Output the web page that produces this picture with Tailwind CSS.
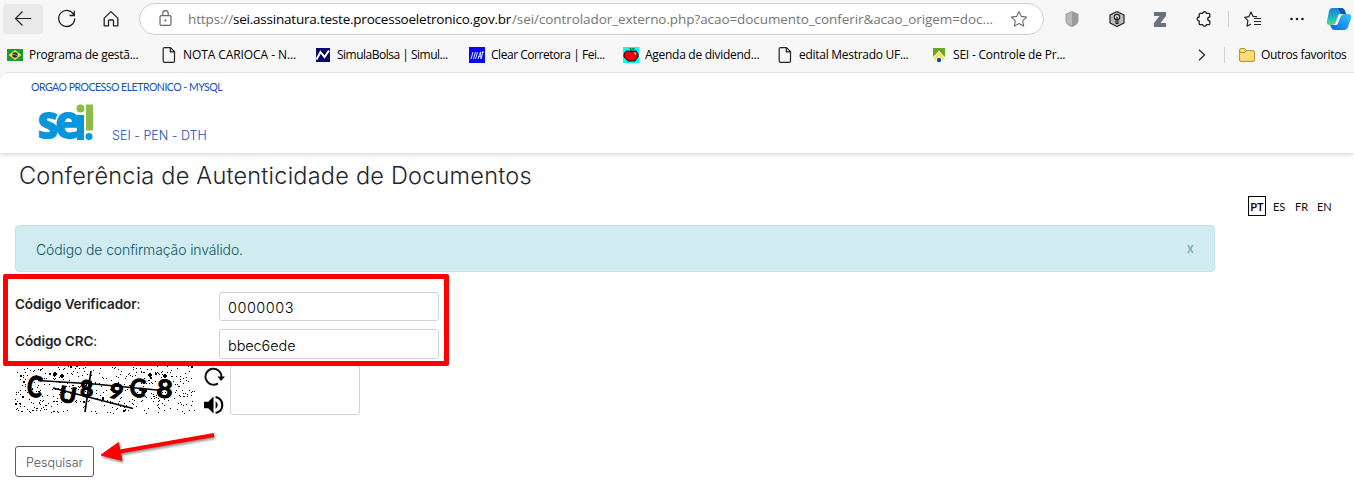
<!DOCTYPE html>
<html lang="pt-BR">
<head>
<meta charset="utf-8">
<title>SEI - Conferência de Autenticidade de Documentos</title>
<script src="https://cdn.jsdelivr.net/npm/@tailwindcss/browser@4"></script>
</head>
<body class="w-[1354px] h-[496px] overflow-hidden bg-[#f7f7f7] font-['Lato',sans-serif] text-[#212529]">

<!-- Browser toolbar -->
<div class="h-[72px] bg-[#f7f7f7] font-['Open_Sans',sans-serif] text-black">
  <div class="flex h-[38px] items-center pl-[3px]">
    <div class="flex h-[30px] w-10 items-center justify-center rounded bg-[#e9e9e9]">
      <svg class="size-5" viewBox="0 0 20 20" fill="none" stroke="#222" stroke-width="1.2"><path d="M18 9.5H2.5M9.5 2.5l-7 7 7 7"/></svg>
    </div>
    <svg class="ml-[14px] size-5" viewBox="0 0 20 20" fill="none" stroke="#222" stroke-width="1.3"><path d="M17 6.2A8 8 0 1 0 17.7 9.5M17.3 1.8v4.7h-4.8"/></svg>
    <svg class="ml-6 size-5" viewBox="0 0 20 20" fill="none" stroke="#222" stroke-width="1.3" stroke-linejoin="round"><path d="M3.2 9.1 10 2.6l6.800 6.500v7.700h-4.300v-4.800a1 1 0 0 0-1-1h-3a1 1 0 0 0-1 1v4.800H3.200z"/></svg>
    <div class="ml-[18px] flex h-8 w-[905px] items-center rounded-full border border-[#cfcfcf] bg-white pl-[18px]">
      <svg class="h-5 w-[15px]" viewBox="0 0 15 20" fill="none" stroke="#666" stroke-width="1.2"><rect x="2" y="6.600" width="11" height="9.800" rx="1.500"/><path d="M4.800 6.500V4.300a2.700 2.700 0 0 1 5.400 0v2.200"/><circle cx="7.500" cy="11.500" r=".5" fill="#666"/></svg>
      <div class="ml-[15px] flex text-[13.500px] leading-[18px] whitespace-nowrap text-[#767676]"><span class="w-[45px] tracking-[-0.130px]">https://</span><span class="w-[279px] tracking-[-0.220px] text-black">sei.assinatura.teste.processoeletronico.gov.br</span><span class="w-[484px] tracking-[-0.080px]">/sei/controlador_externo.php?acao=documento_conferir&amp;acao_origem=doc...</span></div>
      <svg class="ml-[14px] size-[18px] shrink-0" viewBox="0 0 18 18" fill="none" stroke="#6b6b6b" stroke-width="1.100" stroke-linejoin="round"><path d="m9 1.500 2.300 4.900 5.300.7-3.900 3.700 1 5.300L9 13.500l-4.700 2.600 1-5.300L1.400 7.100l5.300-.7z"/></svg>
    </div>
    <svg class="ml-[21px] h-4 w-[14px]" viewBox="0 0 14 16"><path d="M7 0 13.500 3v6c0 3.500-3 5.800-6.500 7C3.500 14.800.5 12.500.5 9V3z" fill="#9b9b9b"/><path d="M7 1v14c-3-1-5.500-3-5.500-6V3.700z" fill="#b9b9b9"/></svg>
    <svg class="ml-[30px] h-[18px] w-4" viewBox="0 0 16 18" fill="none" stroke="#222" stroke-width="1.200" stroke-linejoin="round"><path d="M8 1.500l7 3.500v8l-7 3.500L1 13V5z" fill="#b9bec4"/><circle cx="8" cy="7" r="2.700" fill="#e8eaec"/><path d="M7 9.500v4h2v-4M8 6.500v3"/></svg>
    <svg class="ml-[28px] h-[17px] w-[14px]" viewBox="0 0 14 17"><path d="M1 1h12v4L7.500 12H13v4H1v-4l5.500-7H1z" fill="#66727c"/></svg>
    <svg class="ml-7 h-[18px] w-[18px]" viewBox="0 0 18 18" fill="none" stroke="#222" stroke-width="1.300" stroke-linejoin="round"><path d="M5.200 3.300h2.400a2 2 0 0 1 3.900 0h2.300q1 0 1 1V7a2 2 0 0 0 0 4v2.700q0 1-1 1h-2.300a2 2 0 0 1-3.900 0H5.200q-1 0-1-1V11a2 2 0 0 1 0-4V4.300q0-1 1-1z"/></svg>
    <div class="ml-[15px] h-4 w-px bg-[#cfcfcf]"></div>
    <svg class="ml-[15px] h-[17px] w-[17px]" viewBox="0 0 17 17" fill="none" stroke="#222" stroke-width="1.200" stroke-linejoin="round"><path d="M13 5.700 9.100 5.500 7 1 4.900 5.700.8 6.300l3.100 3.300L3 15.200l4-2.200M10 7.500h7M10 10.500h7M10 13.500h7"/></svg>
    <svg class="ml-7 h-1 w-4" viewBox="0 0 16 4" fill="#222"><circle cx="2.500" cy="2" r="1.300"/><circle cx="8" cy="2" r="1.300"/><circle cx="13.500" cy="2" r="1.300"/></svg>
    <svg class="ml-[21px] h-6 w-[26px] shrink-0" viewBox="0 0 26 24">
      <defs><linearGradient id="ca" x1="0" y1="0" x2="0" y2="1"><stop offset="0" stop-color="#1680d6"/><stop offset=".5" stop-color="#20b1c5"/><stop offset="1" stop-color="#4ce08d"/></linearGradient><linearGradient id="cb" x1="1" y1="0" x2="0" y2="1"><stop offset="0" stop-color="#35c8f5"/><stop offset=".6" stop-color="#1a8cf2"/><stop offset="1" stop-color="#1858dc"/></linearGradient></defs>
      <path d="M6 1h9q3 0 4 3l1 3h-4q-3 0-4 3l-2 6q-1 2-3 2H4q-4 0-3-4l2-10q1-3 3-3z" fill="url(#ca)"/>
      <path d="M18 7h4q4 0 3 4l-3 9q-1 3-4 3H9q-3 0-4-3l-1-2h4q3 0 4-3l2-6q1-2 4-2z" fill="url(#cb)"/>
      <path d="M12 1h3q3 0 4 3l1 3h-5z" fill="#174fae"/><path d="M14.500 7H18q-2 0-3 2l-3 7q-.500 2-2 2H7q2 0 3-3l2-6q.800-2 2.500-2z" fill="#fff"/>
    </svg>
  </div>

  <!-- Favourites bar -->
  <div class="flex h-[34px] items-center pl-[7px] text-[12px] leading-4 tracking-[-0.280px] whitespace-nowrap">
    <div class="flex w-[154px] items-center gap-[6px]"><svg class="h-3 w-4" viewBox="0 0 16 12"><path d="M0 0h16v12H0z" fill="#149b32"/><path d="M8 1l6.500 5L8 11 1.500 6z" fill="#ffdf28"/><circle cx="8" cy="6" r="2.700" fill="#152d72"/><path d="M5.500 5.500q3-.5 5 1.500" stroke="#dde" stroke-width=".6" fill="none"/></svg>Programa de gestã...</div>
    <div class="flex w-[154px] items-center gap-[6px]"><svg class="h-4 w-4" viewBox="0 0 16 16" fill="none" stroke="#222" stroke-width="1.200" stroke-linejoin="round"><path d="M3.500.7h6l4 4V14q0 1.300-1.300 1.300H3.500q-1.300 0-1.300-1.300V2Q2.200.7 3.500.7zM9.300.7v4.200h4.200"/></svg><span class="tracking-[-0.080px]">NOTA CARIOCA - N...</span></div>
    <div class="flex w-[154px] items-center gap-[6px]"><svg class="h-4 w-4" viewBox="0 0 16 16"><path d="M1 1h14v14H1z" fill="#070766"/><path d="M1.500 12.500 5.500 5l4 5L14 3.500" stroke="#fff" stroke-width="2" fill="none"/></svg><span class="tracking-[-0.500px]">SimulaBolsa | Simul...</span></div>
    <div class="flex w-[154px] items-center gap-[6px]"><svg class="h-4 w-4" viewBox="0 0 16 16"><path d="M0 0h16v16H0z" fill="#0808f5"/><path d="m2 12 2-7M4.500 12l2-7m0 7 2-7M9 12l2.500-7 .5 7M9.500 9.500h2M12.500 5h2.500M13.700 5l-1.500 7" stroke="#dfe3ff" stroke-width="1" fill="none"/></svg><span class="tracking-[-0.460px]">Clear Corretora | Fei...</span></div>
    <div class="flex w-[154px] items-center gap-[6px]"><svg class="h-4 w-4" viewBox="0 0 16 16"><path d="M0 0h16v16H0z" fill="#00ffff"/><path d="M3 4h3l2 1 2-1h3l2 3v3l-3 4H5l-4-4V7z" fill="#f00000" stroke="#200" stroke-width="1"/><path d="M8 5V2L6.500 1" stroke="#200" fill="none"/><path d="M8 3q2-3 4-1.500Q10.500 3.500 8 3z" fill="#0a7d12"/><path d="M11 6h1.500v2" stroke="#fff" fill="none"/></svg>Agenda de dividend...</div>
    <div class="flex w-[154px] items-center gap-[6px]"><svg class="h-4 w-4" viewBox="0 0 16 16" fill="none" stroke="#222" stroke-width="1.200" stroke-linejoin="round"><path d="M3.500.7h6l4 4V14q0 1.300-1.300 1.300H3.500q-1.300 0-1.300-1.300V2Q2.200.7 3.500.7zM9.300.7v4.200h4.200"/></svg>edital Mestrado UF...</div>
    <div class="flex w-[154px] items-center gap-[6px]"><svg class="h-4 w-4" viewBox="0 0 16 16"><path d="M2 1h12v9L8 4l-6 6z" fill="#6fa52a"/><path d="M8 4l6.500 9h-3L8 9l-3.500 4h-3z" fill="#f8e04a" stroke="#fff" stroke-width=".5"/><circle cx="8" cy="13" r="2.200" fill="#0f4b95"/></svg><span class="tracking-[-0.200px]">SEI - Controle de Pr...</span></div>
    <svg class="ml-[113px] h-3 w-2" viewBox="0 0 8 12" fill="none" stroke="#333" stroke-width="1.400"><path d="m1 .800 5.500 5.200L1 11.200"/></svg>
    <div class="ml-[18px] h-4 w-px bg-[#d2d2d2]"></div>
    <svg class="ml-[14px] mr-[6px] h-[14px] w-4" viewBox="0 0 16 14" stroke="#b98a1a" stroke-linejoin="round"><path d="M.6 2Q.6.600 2 .6h3.600L7.500 2.600H14q1.400 0 1.400 1.400v8q0 1.400-1.400 1.400H2Q.6 13.400.6 12z" fill="#ffdd7b"/><path d="M.8 4.500h4.700l2-1.900" fill="none"/></svg>
    <span class="tracking-[-0.350px]">Outros favoritos</span>
  </div>
</div>

<!-- Page -->
<div class="h-[424px] rounded-tl-lg border-t border-[#e6e6e6] bg-white">
  <header class="h-[80px] rounded-tl-lg bg-white pl-[31px] shadow-[0_2px_4px_rgba(0,0,0,0.160)]">
    <div class="pt-[7px] text-[10.500px] leading-[14px] tracking-[-0.480px] text-[#1351b4]">ORGAO PROCESSO ELETRONICO - MYSQL</div>
    <div class="flex">
      <svg class="mt-[8px] ml-[5px] h-[44px] w-[60px] overflow-visible" viewBox="0 0 60 44"><text transform="translate(1 37) scale(.860 1)" font-family="Open Sans" font-weight="800" font-size="47" letter-spacing="-5" textLength="46" lengthAdjust="spacingAndGlyphs" fill="#0795dc">se</text><path d="M41 13h7v25h-7z" fill="#0795dc"/><circle cx="44.500" cy="6.500" r="4" fill="#8dbb49"/><path d="M50 2.500h7V28.500h-7z" fill="#8dbb49"/><circle cx="53" cy="34.500" r="3.500" fill="#0795dc"/></svg>
      <span class="mt-[34px] ml-4 font-['Inter',sans-serif] text-[12.500px] leading-4 font-light tracking-[0.020px] text-[#1351b4]">SEI - PEN - DTH</span>
    </div>
  </header>

  <main class="relative mt-px">
    <h1 class="pt-[5px] pl-[19px] font-['Inter',sans-serif] text-[23.500px] leading-[33px] font-light tracking-[0.220px] text-[#212529]">Conferência de Autenticidade de Documentos</h1>
    <nav class="mt-[4px] flex h-5 items-center pl-[1248px] text-[11px] leading-4 text-[#111]">
      <span class="flex h-5 w-[18px] items-center justify-center border border-black pt-px font-bold">PT</span><span class="ml-[7px] w-[22px] pt-px">ES</span><span class="w-[22px] pt-px">FR</span><span class="pt-px">EN</span>
    </nav>
    <div class="mt-[9px] ml-[15px] flex h-[47px] w-[1200px] items-center justify-between rounded border border-[#bee5eb] bg-[#d1ecf1] pr-5 pl-5 font-['Inter',sans-serif] text-[14px] text-[#0c5460]">
      <span class="pt-px font-light tracking-[-0.120px]">Código de confirmação inválido.</span><span class="text-[13px] font-medium text-[#7ba8af]">x</span>
    </div>

    <!-- Highlighted form fields -->
    <form class="relative z-10 mt-[2px] ml-[3px] h-[92px] w-[446px] rounded-[2px] border-[5px] border-[#ff0000] pt-[13px] pl-[7px] font-['Inter',sans-serif] text-[13.500px]">
      <div class="flex h-[37px]"><label class="w-[204px] pt-[2px] leading-5"><span class="font-semibold tracking-[-0.080px]">Código Verificador</span>:</label><div class="h-[29px] w-[220px] rounded-[3px] border border-[#ced4da] pt-[1px] pl-2 text-[14.500px] leading-7 font-light tracking-[0.500px] text-black">0000003</div></div>
      <div class="flex"><label class="w-[204px] pt-[2px] leading-5"><span class="font-semibold tracking-[-0.060px]">Código CRC</span>:</label><div class="h-[30px] w-[220px] rounded-[3px] border border-[#ced4da] pt-[2px] pl-2 text-[14.500px] leading-7 font-light tracking-[-0.100px] text-black">bbec6ede</div></div>
    </form>

    <!-- Captcha -->
    <div class="-mt-[1px] flex h-[50px] pl-[15px]">
      <svg class="h-[50px] w-[180px]" viewBox="0 0 180 50">
        <path id="noise" fill="#000" shape-rendering="crispEdges"/>
        <g font-family="Lato" font-weight="700" stroke="#000" stroke-width="1" stroke-linejoin="round">
          <text transform="translate(11 31) rotate(6) scale(.8 1)" font-size="29">C</text>
          <text transform="translate(43 36) rotate(10) scale(1.050 1)" font-size="22">U</text>
          <text transform="translate(65 32) scale(1 1)" font-size="23">8</text>
          <text transform="translate(93 32) rotate(14) scale(1.100 1)" font-size="21">9</text>
          <text transform="translate(114 31) rotate(6) scale(.9 1)" font-size="25">G</text>
          <text transform="translate(141 32) rotate(5) scale(1.100 1)" font-size="25">8</text>
        </g>
        <path d="M23 15.500 79 19l68 6.500M38 23l80 20.500M76 6l-6 41" stroke="#000" stroke-width="1.700" fill="none"/>
      </svg>
      <div class="ml-[8px] flex w-[22px] flex-col">
        <svg class="mt-[1px] h-[20px] w-[22px]" viewBox="0 0 22 20" fill="none" stroke="#111" stroke-width="2"><path d="M15 17.300A8 8 0 1 1 18.500 11"/><path d="M14.500 10.500h7.500l-4 4.500z" fill="#111" stroke="none"/></svg>
        <svg class="mt-[9px] h-[20px] w-[21px]" viewBox="0 0 20 18"><path d="M1 6h4l5-5v16l-5-5H1z" fill="#000"/><path d="M12 5.200q4 3.800 0 7.600z"/><path d="M12 1.300c8.500 2 8.500 13.400 0 15.400" fill="none" stroke="#000" stroke-width="2"/></svg>
      </div>
      <div class="ml-[5px] h-[50px] w-[130px] rounded-[3px] border border-[#ced4da]"></div>
    </div>

    <button class="mt-[31px] ml-[15px] block h-[31px] w-[79px] rounded-[3px] border border-[#555b61] bg-white pt-[3px] font-['Inter',sans-serif] text-[12.500px] leading-5 font-light text-[#4c555e]">Pesquisar</button>
    <svg class="absolute top-[276px] left-[96px] h-[38px] w-[124px] drop-shadow-[1px_2px_1px_rgba(0,0,0,0.400)]" viewBox="0 0 124 38"><path d="M118 5 24 21.500" stroke="#ff0000" stroke-width="4"/><path d="M5 25 22.500 12.500 24 21l2 9.500z" fill="#ff0000" stroke="#ff0000" stroke-linejoin="round"/></svg>
  </main>
</div>

<script>
// Captcha speckle from a fixed seed, so that it is the same on each load.
let seed = 7, d = "";
const rnd = n => (seed = (seed * 16807) % 2147483647) % n;
for (let i = 0; i < 430; i++) d += `M${rnd(180)} ${rnd(49)}h1v1h-1z`;
for (let i = 0; i < 14; i++) d += `M${rnd(177)} ${rnd(46)}h2v2h-2z`;
for (const [x, y] of [[38, 8], [45, 10], [133, 9], [148, 10], [128, 25]]) d += `M${x} ${y}h4v2h-4zM${x + 1} ${y - 1}h2v4h-2z`;
document.getElementById("noise").setAttribute("d", d);
</script>
</body>
</html>
